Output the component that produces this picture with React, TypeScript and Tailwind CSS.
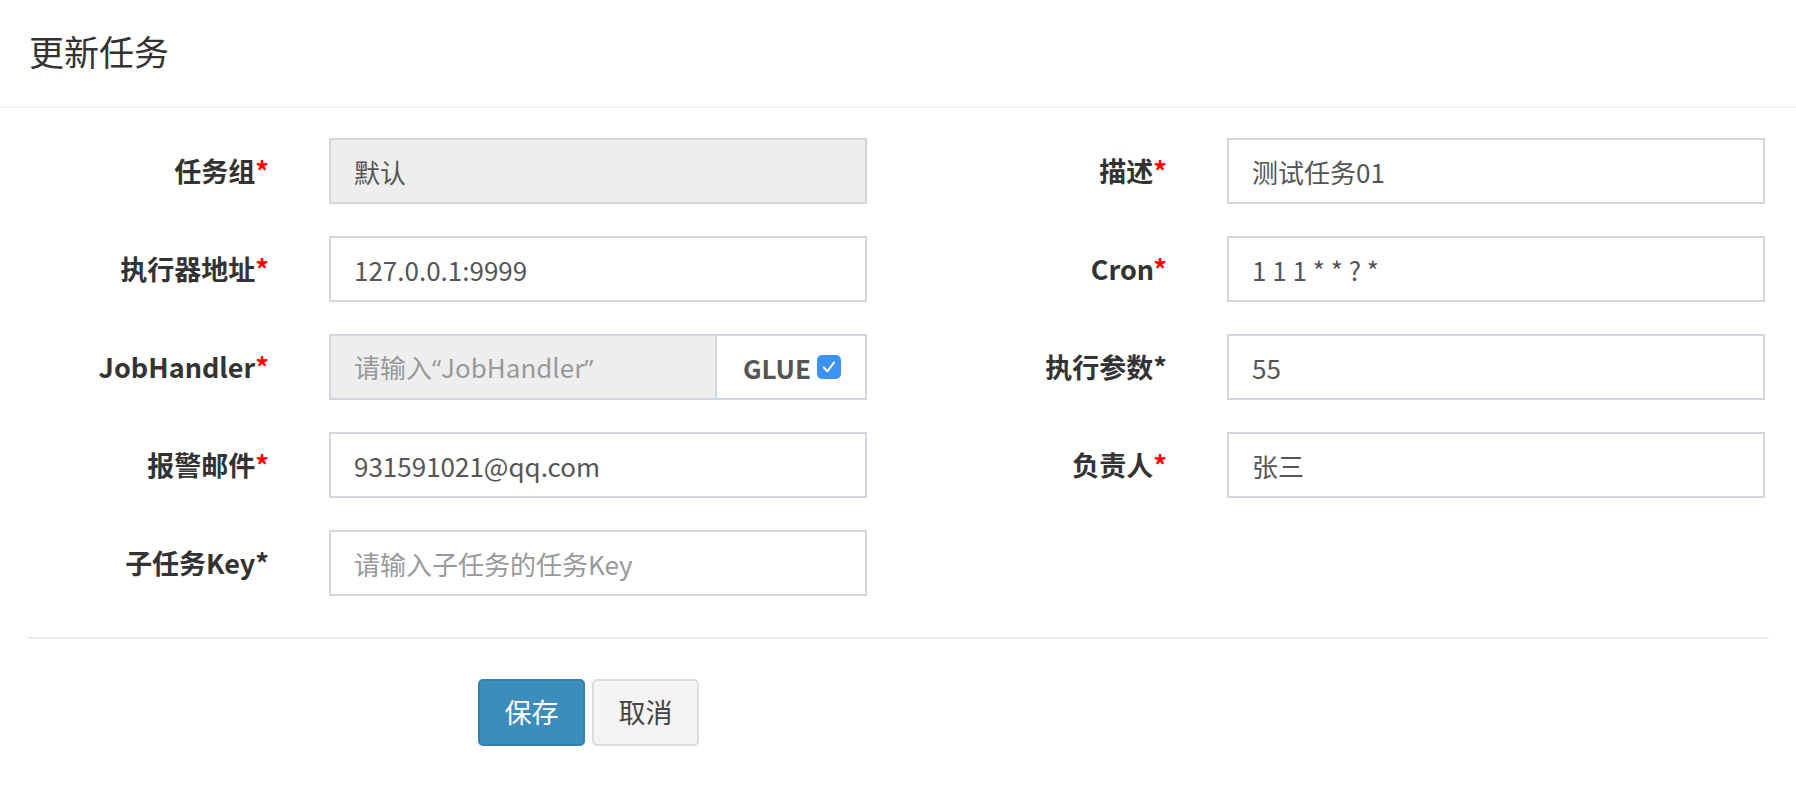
import type { ReactNode } from "react";

const font = {
  fontFamily: '"Noto Sans CJK SC", "Noto Sans", sans-serif',
};

type FieldProps = {
  label: ReactNode;
  redStar?: boolean;
  children: ReactNode;
};

function Label({ label, redStar = true }: { label: ReactNode; redStar?: boolean }) {
  return (
    <div className="flex h-[66px] items-center justify-end pr-[31px] text-[27px] font-bold text-[#333]">
      <span>
        {label}
        <span className={redStar ? "text-[#ff0000]" : "text-[#333]"}>*</span>
      </span>
    </div>
  );
}

function Field({ label, redStar, children }: FieldProps) {
  return (
    <>
      <Label label={label} redStar={redStar} />
      <div className="px-[29px]">{children}</div>
    </>
  );
}

function Input({
  value,
  placeholder,
  disabled,
}: {
  value?: string;
  placeholder?: string;
  disabled?: boolean;
}) {
  return (
    <div
      className={
        "flex h-[66px] items-center border-2 border-[#d2d6de] px-[23px] text-[26px] " +
        (disabled ? "bg-[#eeeeee] " : "bg-white ") +
        (value ? "text-[#555]" : "text-[#999]")
      }
    >
      <span className="whitespace-pre">{value || placeholder}</span>
    </div>
  );
}

// latin curly quotes, the CJK font draws them full width
const quote = { fontFamily: '"Open Sans", sans-serif' };

export default function App() {
  return (
    <div className="min-h-[806px] w-[1796px] bg-white" style={font}>
      <div className="flex h-[108px] items-center border-b-2 border-[#f4f4f4] pl-[29px] pb-[3px]">
        <h4 className="text-[35px] font-normal text-[#333]">更新任务</h4>
      </div>

      <div className="grid grid-cols-[300px_596px_302px_596px] gap-y-[32px] pt-[30px]">
        <Field label="任务组">
          <Input value="默认" disabled />
        </Field>
        <Field label="描述">
          <Input value="测试任务01" />
        </Field>

        <Field label="执行器地址">
          <Input value="127.0.0.1:9999" />
        </Field>
        <Field label="Cron">
          <Input value="1 1 1 * * ? *" />
        </Field>

        <Field label="JobHandler">
          <div className="flex h-[66px]">
            <div className="flex flex-1 items-center border-2 border-[#d2d6de] bg-[#eeeeee] px-[23px] text-[26px] text-[#999]">
              <span>
                请输入<span style={quote}>“</span>JobHandler
                <span style={quote}>”</span>
              </span>
            </div>
            <div className="flex w-[150px] items-center justify-center gap-[6px] border-2 border-l-0 border-[#d2d6de] bg-white pl-[2px] text-[26px] font-bold text-[#555]">
              <span>GLUE</span>
              <span className="flex h-[24px] w-[24px] items-center justify-center rounded-[5px] bg-[#3b93f5]">
                <svg width="18" height="18" viewBox="0 0 16 16" fill="none">
                  <path
                    d="M3.5 8.5 L6.5 11.8 L12.5 4"
                    stroke="white"
                    strokeWidth="1.8"
                    strokeLinecap="round"
                    strokeLinejoin="round"
                  />
                </svg>
              </span>
            </div>
          </div>
        </Field>
        <Field label="执行参数" redStar={false}>
          <Input value="55" />
        </Field>

        <Field label="报警邮件">
          <Input value="931591021@qq.com" />
        </Field>
        <Field label="负责人">
          <Input value="张三" />
        </Field>

        <Field label="子任务Key" redStar={false}>
          <Input placeholder="请输入子任务的任务Key" />
        </Field>
      </div>

      <div className="mx-[27px] mt-[41px] border-t-2 border-[#eeeeee]" />

      <div className="flex gap-[7px] pl-[478px] pt-[40px]">
        <button className="h-[67px] w-[107px] rounded-[5px] border-2 border-[#367fa9] bg-[#3c8dbc] text-[27px] text-white">
          保存
        </button>
        <button className="h-[67px] w-[107px] rounded-[5px] border-2 border-[#dddddd] bg-[#f4f4f4] text-[27px] text-[#444]">
          取消
        </button>
      </div>
    </div>
  );
}
